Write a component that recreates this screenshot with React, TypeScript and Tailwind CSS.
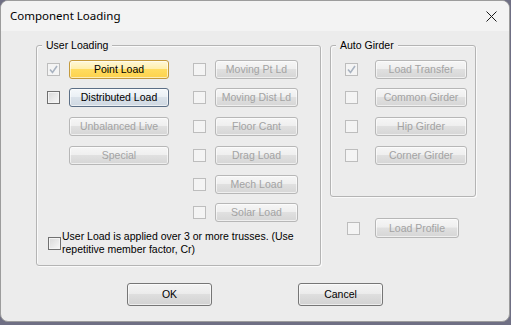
import React from 'react'

type Variant = 'hot' | 'focus' | 'normal' | 'off'

const font = "font-['Liberation_Sans',Arial,sans-serif]"

const variants: Record<Variant, string> = {
  hot: 'border-[#c49a3c] text-black bg-[linear-gradient(to_bottom,#fff8d8_0%,#ffefad_45%,#ffdc60_50%,#fdd24c_100%)]',
  focus: 'border-[#5c6f86] text-black bg-[linear-gradient(to_bottom,#f5f8fb_0%,#eaf0f5_45%,#dae2ea_50%,#cfd8e2_100%)]',
  normal: 'border-[#767676] text-black bg-[linear-gradient(to_bottom,#f3f3f3_0%,#ececec_45%,#dedede_50%,#d2d2d2_100%)]',
  off: 'border-[#b7b7b7] text-[#a3a3a3] bg-[linear-gradient(to_bottom,#f6f6f6_0%,#efefef_45%,#e0e0e0_50%,#d6d6d6_100%)]',
}

function Btn({ label, w, v = 'off', h = 'h-[19px]' }: { label: string; w: string; v?: Variant; h?: string }) {
  return (
    <div
      className={`${w} ${h} ${variants[v]} flex items-center justify-center rounded-[3px] border text-[10.5px] leading-none shadow-[inset_0_0_0_1px_rgba(255,255,255,0.6)] ${font}`}
    >
      {label}
    </div>
  )
}

function Box({ checked = false, enabled = false }: { checked?: boolean; enabled?: boolean }) {
  return (
    <span
      className={`w-[13px] h-[13px] shrink-0 flex items-center justify-center border ${
        enabled
          ? 'border-[#707070] bg-[linear-gradient(135deg,#d8d8d8,#f8f8f8)] shadow-[inset_0_0_0_1px_#f4f4f4]'
          : 'border-[#bdbdbd] bg-[#f4f4f4]'
      }`}
    >
      {checked && (
        <svg width='11' height='11' viewBox='0 0 11 11'>
          <path d='M2 5.5 L4.5 8.5 L9 2' fill='none' stroke='#a9b3c1' strokeWidth='1.6' />
        </svg>
      )}
    </span>
  )
}

function Group({ title, w, h, children }: { title: string; w: string; h: string; children: React.ReactNode }) {
  return (
    <div className={`relative ${w} ${h} rounded-[3px] border border-[#b4b4b4] shadow-[inset_1px_1px_0_#fafafa,1px_1px_0_#fafafa]`}>
      <span className={`absolute -top-[8px] left-[5px] px-[4px] bg-[#ececec] text-[10.5px] leading-[14px] text-black ${font}`}>
        {title}
      </span>
      {children}
    </div>
  )
}

export default function App() {
  const mid = ['Moving Pt Ld', 'Moving Dist Ld', 'Floor Cant', 'Drag Load', 'Mech Load', 'Solar Load']
  const rowGap = ['mt-0', 'mt-[9px]', 'mt-[10px]', 'mt-[10px]', 'mt-[10px]', 'mt-[9px]']
  const girders = ['Load Transfer', 'Common Girder', 'Hip Girder', 'Corner Girder']

  return (
    <div className='w-[511px] h-[325px] bg-[#6f6f84] overflow-hidden'>
      <div className='w-[510px] h-[322px] rounded-[8px] overflow-hidden border border-[#9c9c9c] bg-[#ececec] flex flex-col'>
        {/* title bar */}
        <div className='h-[30px] shrink-0 bg-[#f3f3f3] flex items-center justify-between pl-[9px] pr-[12px]'>
          <span className="text-[11.5px] text-black font-['Noto_Sans',sans-serif]">Component Loading</span>
          <svg width='11' height='11' viewBox='0 0 11 11'>
            <path d='M0.5 0.5 L10.5 10.5 M10.5 0.5 L0.5 10.5' stroke='#1a1a1a' strokeWidth='1' />
          </svg>
        </div>

        {/* body */}
        <div className='flex pl-[35px] pt-[14px]'>
          <Group title='User Loading' w='w-[285px]' h='h-[221px]'>
            <div className='flex pl-[10px] pt-[14px]'>
              <div className='flex flex-col w-[146px]'>
                <div className='flex items-center gap-[9px] h-[19px]'>
                  <Box checked />
                  <Btn label='Point Load' w='w-[100px]' v='hot' />
                </div>
                <div className='flex items-center gap-[9px] h-[19px] mt-[9px]'>
                  <Box enabled />
                  <Btn label='Distributed Load' w='w-[100px]' v='focus' />
                </div>
                <div className='flex items-center pl-[22px] h-[19px] mt-[10px]'>
                  <Btn label='Unbalanced Live' w='w-[100px]' />
                </div>
                <div className='flex items-center pl-[22px] h-[19px] mt-[10px]'>
                  <Btn label='Special' w='w-[100px]' />
                </div>
              </div>
              <div className='flex flex-col'>
                {mid.map((m, i) => (
                  <div key={m} className={`flex items-center gap-[9px] h-[19px] ${rowGap[i]}`}>
                    <Box />
                    <Btn label={m} w='w-[83px]' />
                  </div>
                ))}
              </div>
            </div>
            <div className='flex items-center gap-[1px] pl-[11px] mt-[8px]'>
              <Box enabled />
              <span className={`text-[10.5px] leading-[13px] text-black ${font}`}>
                User Load is applied over 3 or more trusses. (Use
                <br />
                repetitive member factor, Cr)
              </span>
            </div>
          </Group>

          <div className='flex flex-col ml-[9px]'>
            <Group title='Auto Girder' w='w-[146px]' h='h-[152px]'>
              <div className='flex flex-col pl-[14px] pt-[14px]'>
                {girders.map((g, i) => (
                  <div key={g} className={`flex items-center gap-[17px] h-[19px] ${rowGap[i]}`}>
                    <Box checked={i === 0} />
                    <Btn label={g} w='w-[92px]' />
                  </div>
                ))}
              </div>
            </Group>
            <div className='flex items-center gap-[15px] pl-[17px] mt-[21px]'>
              <Box />
              <Btn label='Load Profile' w='w-[84px]' h='h-[20px]' />
            </div>
          </div>
        </div>

        {/* footer */}
        <div className='flex gap-[86px] pl-[126px] mt-[17px]'>
          <Btn label='OK' w='w-[85px]' h='h-[23px]' v='normal' />
          <Btn label='Cancel' w='w-[85px]' h='h-[23px]' v='normal' />
        </div>
      </div>
    </div>
  )
}
